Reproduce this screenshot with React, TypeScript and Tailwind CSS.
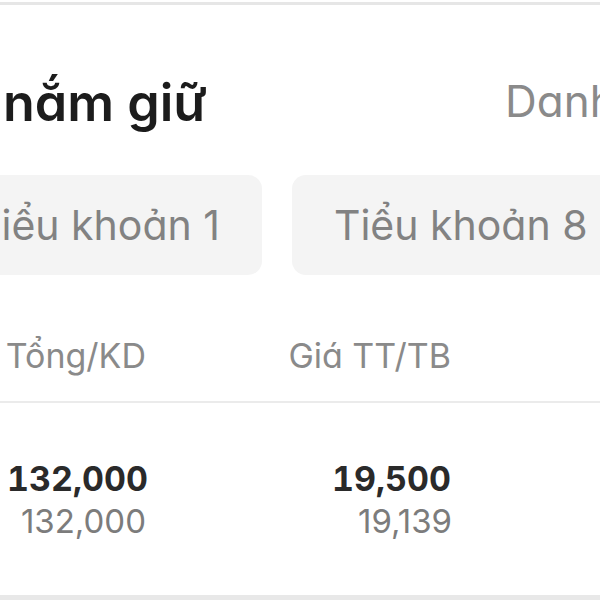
import React from "react";

export default function App() {
  const font = { fontFamily: "Inter, 'Noto Sans', sans-serif" } as React.CSSProperties;
  return (
    <div
      className="w-[600px] h-[600px] overflow-hidden bg-white flex flex-col [font-feature-settings:'cv11']"
      style={font}
    >
      <div className="h-[2px] shrink-0" />
      <div className="h-[3px] shrink-0 bg-[#e6e6e6]" />

      <div className="mt-[72px] flex items-start whitespace-nowrap shrink-0">
        <div className="pl-[3px] w-[505px] shrink-0 text-[52px] leading-none font-semibold text-[#1c1c1c]">
          nắm giữ
        </div>
        <div className="mt-[2px] shrink-0 text-[44px] leading-none text-[#8a8a8a]">Danh mục</div>
      </div>

      <div className="mt-[46px] flex gap-[30px] whitespace-nowrap shrink-0">
        <div className="ml-[-67px] h-[100px] shrink-0 rounded-[14px] bg-[#f4f4f4] px-[42px] flex items-center text-[41px] leading-none text-[#828282]">
          Tiểu khoản 1
        </div>
        <div className="h-[100px] shrink-0 rounded-[14px] bg-[#f4f4f4] px-[42px] flex items-center text-[41px] leading-none text-[#828282]">
          Tiểu khoản 8
        </div>
      </div>

      <div className="mt-[64px] flex whitespace-nowrap text-[34px] leading-none text-[#8a8a8a] shrink-0">
        <div className="w-[146px] text-right">Tổng/KD</div>
        <div className="w-[305px] text-right">Giá TT/TB</div>
      </div>

      <div className="mt-[28px] h-[2px] bg-[#ebebeb] shrink-0" />

      <div className="mt-[59px] flex flex-col gap-[9px] shrink-0">
        <div className="flex text-[34px] leading-none font-bold text-[#2a2a2a] tabular-nums">
          <div className="w-[148px] text-right">132,000</div>
          <div className="w-[303px] text-right">19,500</div>
        </div>
        <div className="flex text-[33px] leading-none text-[#7c7c7c]">
          <div className="w-[146px] text-right">132,000</div>
          <div className="w-[306px] text-right">19,139</div>
        </div>
      </div>

      <div className="mt-auto h-[5px] bg-[#e8e8e8] shrink-0" />
    </div>
  );
}
